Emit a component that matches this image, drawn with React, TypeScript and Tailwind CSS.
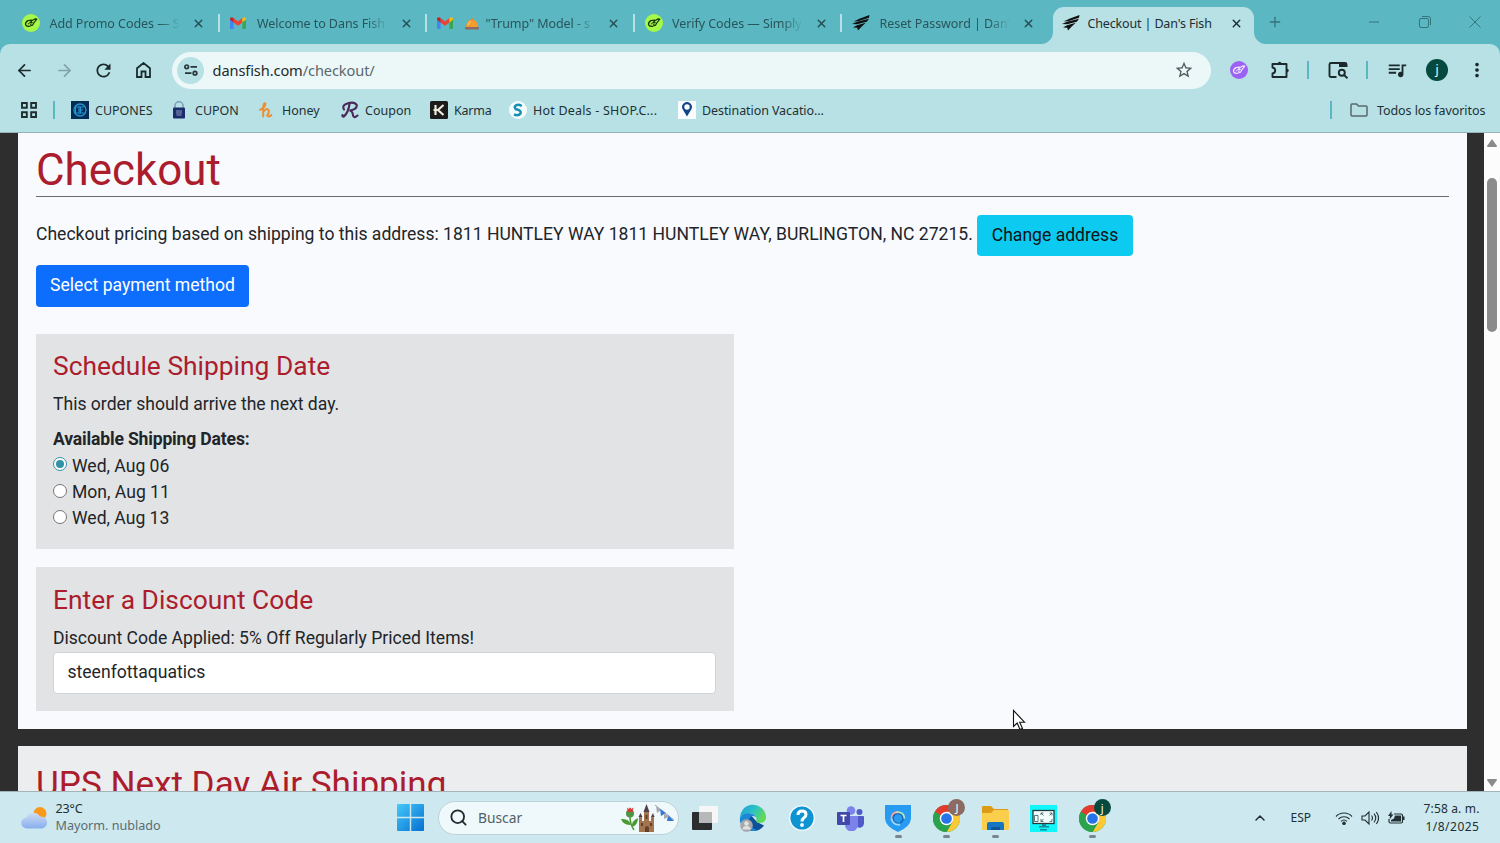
import { ReactNode } from "react";
import { ArrowLeft, ArrowRight, ChevronUp, Minus, Plus, Search, X } from "lucide-react";
import { MdMoreVert, MdQueueMusic, MdRefresh, MdStarBorder } from "react-icons/md";

function SimplyIcon({ bg = "#a5f948", ink = "#17330c" }: { bg?: string; ink?: string }) {
  return (
    <svg viewBox="0 0 18 18" className="size-[18px]">
      <circle cx="9" cy="9" r="9" fill={bg} />
      <path
        d="M9.500 6.200 6 6.600Q3.300 8 3.500 10.500 4.300 12.800 7.300 12.300L10.500 11.200 12.200 8.300 14.800 5.200 13.200 4.800 9.800 6.800 7.800 8.800 10.200 8.600"
        fill="none"
        stroke={ink}
        strokeWidth="1.2"
        strokeLinejoin="round"
        strokeLinecap="round"
      />
      <path d="M5.800 9.800h1.500M8.300 10.500h1.200" stroke={ink} strokeWidth="1" />
    </svg>
  );
}

function GmailIcon() {
  return (
    <svg viewBox="0 0 16 12" className="h-3 w-4">
      <path d="M0 1.6V11q0 1 1 1h2.6V5Z" fill="#4285f4" />
      <path d="M12.4 5v7H15q1 0 1-1V1.6Z" fill="#34a853" />
      <path d="M3.6 1 8 4.4 12.4 1v4.4L8 8.8 3.6 5.4Z" fill="#ea4335" />
      <path d="M0 2Q.3-.8 3.6 1v4.4L0 2.8Z" fill="#c5221f" />
      <path d="M16 2Q15.7-.8 12.4 1v4.4L16 2.8Z" fill="#fbbc04" />
    </svg>
  );
}

function FishIcon() {
  return (
    <svg viewBox="0 0 18 16" className="h-4 w-[18px]" fill="#111">
      <path d="M1.500 6.500 8 3.500 17.500 0 17 2.800 7 6Z" />
      <path d="M0 9 5 6.800 17 3.800 14.800 6.800 5 9.300Z" />
      <path d="M1 12.500 5 10.200 13.800 7.800 9.500 11.800 6 15.500 5.200 12.800Z" />
    </svg>
  );
}

function BellIcon() {
  return (
    <svg viewBox="0 0 14 12" className="h-3 w-3.5">
      <path d="M1 9.200a6 7.700 0 0 1 12 0Z" fill="#f79b2c" />
      <circle cx="7" cy="1.600" r="1.300" fill="#e98722" />
      <path d="M3 7Q4 4 6 3.500" stroke="#ffd083" fill="none" />
      <rect y="9" width="14" height="2.500" rx="1" fill="#8d6a65" />
    </svg>
  );
}

const tabs: { icon: ReactNode; title: ReactNode }[] = [
  { icon: <SimplyIcon />, title: "Add Promo Codes — S" },
  { icon: <GmailIcon />, title: "Welcome to Dans Fish" },
  {
    icon: <GmailIcon />,
    title: (
      <span className="flex items-center">
        <BellIcon /> <span className="ml-[7px]">"Trump" Model - s</span>
      </span>
    ),
  },
  { icon: <SimplyIcon />, title: "Verify Codes — Simply" },
  { icon: <FishIcon />, title: "Reset Password | Dan's" },
];

function TabStrip() {
  return (
    <div className="flex h-[44px] bg-[#5bb7c1] pl-[12px]">
      {tabs.map((tab, i) => (
        <div key={i} className="flex w-[207.5px] shrink-0 items-center pt-[2px] pl-[10px]">
          <span className="flex w-[27px] shrink-0 items-center">{tab.icon}</span>
          <span className="w-[134px] shrink-0 overflow-hidden whitespace-nowrap pt-px pl-[0.5px] tracking-[-0.06px] text-[#29555b] [mask-image:linear-gradient(to_right,#000_82%,transparent_98%)]">
            {tab.title}
          </span>
          <X size={13} strokeWidth={2.6} className="ml-[9px] shrink-0 text-[#254c51]" />
          {i < 4 && <span className="ml-auto h-[18px] w-[2px] bg-[#b7e2e5]" />}
        </div>
      ))}
      <div className="-ml-[9px] flex w-[222px] shrink-0 items-end self-stretch">
        <svg viewBox="0 0 12 12" className="size-[12px] shrink-0">
          <path d="M12 0V12H0A12 12 0 0 0 12 0Z" fill="#b7e1e5" />
        </svg>
        <div className="flex h-[37px] w-[201px] shrink-0 items-center rounded-t-[11px] bg-[#b7e1e5] pb-[5px] pl-[9px]">
          <FishIcon />
          <span className="ml-[8px] w-[142px] whitespace-nowrap pt-px tracking-[-0.15px] text-[#1d2d30]">
            Checkout | Dan's Fish
          </span>
          <X size={13} strokeWidth={2.6} className="text-[#1b2b2d]" />
        </div>
        <svg viewBox="0 0 12 12" className="size-[12px] shrink-0">
          <path d="M0 0V12H12A12 12 0 0 1 0 0Z" fill="#b7e1e5" />
        </svg>
      </div>
      <div className="flex grow items-center pl-[4px] text-[#34747b]">
        <Plus size={16} strokeWidth={2} />
        <Minus size={16} strokeWidth={1.5} className="ml-auto" />
        <svg viewBox="0 0 12 12" className="ml-[37px] size-[12px]" fill="none" stroke="currentColor">
          <rect x="0.5" y="2.5" width="9" height="9" rx="1.5" />
          <path d="M3 0.5h6.500a2 2 0 0 1 2 2V9" />
        </svg>
        <svg viewBox="0 0 12 12" className="ml-[38px] mr-[19px] size-[12px]" stroke="currentColor">
          <path d="M0.5 0.5 11.5 11.5M11.5 0.5 0.5 11.5" />
        </svg>
      </div>
    </div>
  );
}

function Toolbar() {
  return (
    <div className="bg-[#5bb7c1]">
      <div className="flex h-[52px] items-center rounded-t-[10px] bg-[#b7e1e5] text-[#1d2a2c]">
        <ArrowLeft size={19} strokeWidth={2.2} className="ml-[15px]" />
        <ArrowRight size={19} strokeWidth={2.2} className="ml-[21px] text-[#80a4a8]" />
        <MdRefresh size={21} className="ml-[19px]" />
        <svg viewBox="0 0 15 16" className="ml-[22px] h-4 w-[15px]" fill="none" stroke="currentColor" strokeWidth="1.8">
          <path d="M1 6.200 7.500 1 14 6.200V15H9.500V9.500h-4V15H1Z" />
        </svg>
        <div className="ml-[21px] flex h-[37px] w-[1039px] items-center rounded-full bg-[#ecf7f8] pl-[5px]">
          <span className="flex size-[27px] items-center justify-center rounded-full bg-[#b7e1e5]">
            <svg viewBox="0 0 14 12" className="h-3 w-3.5" fill="none" stroke="#273538" strokeWidth="1.7">
              <circle cx="2.700" cy="2.800" r="1.800" />
              <path d="M6.500 2.800H13M1 9.200h6.500" />
              <circle cx="11" cy="9.200" r="1.800" />
            </svg>
          </span>
          <span className="ml-[8.5px] pb-px text-[14.6px] tracking-[-0.1px] text-[#1f2b2d]">
            dansfish.com<span className="text-[#59696b]">/checkout/</span>
          </span>
          <MdStarBorder size={20} className="ml-auto mr-[17px] text-[#4d5b5d]" />
        </div>
        <span className="ml-[19px]">
          <SimplyIcon bg="#9c62f5" ink="#f2e6ff" />
        </span>
        <svg viewBox="0 0 18 18" className="ml-[23px] size-[18px]" fill="none" stroke="currentColor" strokeWidth="1.9">
          <path d="M1.500 3H15.500V16H1.500V12.500Q4.200 12 4.200 9.500T1.500 6.500Z" strokeLinejoin="round" />
          <path d="M6.800 2.500a1.800 1.800 0 0 1 3.600 0ZM16 7.800a1.800 1.800 0 0 1 0 3.600Z" fill="currentColor" stroke="none" />
        </svg>
        <span className="ml-[18px] h-[18px] w-[2px] bg-[#5bb7c1]" />
        <svg viewBox="0 0 20 18" className="ml-[19px] h-[18px] w-5" fill="none" stroke="currentColor" strokeWidth="1.9">
          <path d="M8.500 16H3Q1.500 16 1.500 14.500V3.500Q1.500 2 3 2H17Q18.500 2 18.500 3.500V6" />
          <path d="M11 2h7.500v4H11Z" fill="currentColor" stroke="none" />
          <circle cx="13.800" cy="11.800" r="3" />
          <path d="m16 14 3.500 3.300" />
        </svg>
        <span className="ml-[18px] h-[18px] w-[2px] bg-[#5bb7c1]" />
        <MdQueueMusic size={22} className="ml-[18px]" />
        <span className="ml-[18px] flex size-[22px] items-center justify-center rounded-full bg-[#05493f] text-[12px] text-white">
          j
        </span>
        <MdMoreVert size={22} className="ml-[18px]" />
      </div>
    </div>
  );
}

function Bookmark({ icon, label, className }: { icon: ReactNode; label: string; className: string }) {
  return (
    <div className={`flex shrink-0 items-center whitespace-nowrap ${className}`}>
      <span className="flex w-[24px] shrink-0">{icon}</span>
      <span className="pt-px">{label}</span>
    </div>
  );
}

function BookmarksBar() {
  return (
    <div className="flex h-[37px] items-center border-b border-[#93b4b8] bg-[#b7e1e5] pb-[8px] text-[#1f3134]">
      <svg viewBox="0 0 16 16" className="ml-[21px] size-4" fill="none" stroke="#1f2d2f" strokeWidth="1.9">
        <path d="M1 1h4.800v4.800H1ZM10.200 1H15v4.800h-4.800ZM1 10.200h4.800V15H1ZM10.200 10.200H15V15h-4.800Z" />
      </svg>
      <span className="ml-[16px] mr-[16px] h-[18px] w-[2px] bg-[#5bb7c1]" />
      <Bookmark
        className="w-[100px]"
        label="CUPONES"
        icon={
          <svg viewBox="0 0 18 18" className="size-[18px]">
            <rect width="18" height="18" fill="#062c55" />
            <circle cx="9" cy="9" r="6" fill="none" stroke="#2595d2" strokeWidth="1.3" />
            <path d="M8 4.500v9M13 6H9.500v6H13M9.500 9H12M7 6H4.500v6H7" fill="none" stroke="#2595d2" strokeWidth="1.2" />
          </svg>
        }
      />
      <Bookmark
        className="w-[87px]"
        label="CUPON"
        icon={
          <svg viewBox="0 0 16 18" className="h-[18px] w-4">
            <path d="M4 7V4.800a4 4 0 0 1 8 0V7" fill="none" stroke="#7f9dbb" strokeWidth="1.6" />
            <rect x="2" y="6.500" width="12" height="11" rx="1" fill="#1b2c6b" />
            <path d="M5 10h6M5 12h6M5.500 14h5" stroke="#a9b4d8" strokeWidth="0.8" />
          </svg>
        }
      />
      <Bookmark
        className="w-[83px]"
        label="Honey"
        icon={
          <svg viewBox="0 0 16 18" className="h-[18px] w-4" fill="none" stroke="#ef8e31" strokeWidth="2">
            <path
              d="M2 8.800Q7 6.500 7.500 2.800 6 .8 5.200 6V15.500M5.200 11Q8 6.800 10 8.500T9.300 14.500Q11 16.500 13.300 14"
              strokeLinecap="round"
            />
          </svg>
        }
      />
      <Bookmark
        className="w-[89px]"
        label="Coupon"
        icon={
          <svg viewBox="0 0 18 18" className="size-[18px]" fill="none" stroke="#4b2859" strokeWidth="2.1">
            <path
              d="M8.500 3Q7.500 11 3 15.500 1 16 1.500 14M3 8.500Q.500 4 7 2.200T15.800 4Q16 8.500 8.500 9.500 11.500 10 12 14T16.500 14.500"
              strokeLinecap="round"
            />
          </svg>
        }
      />
      <Bookmark
        className="w-[79px] tracking-[-0.2px]"
        label="Karma"
        icon={
          <svg viewBox="0 0 18 18" className="size-[18px]">
            <rect width="18" height="18" rx="1.500" fill="#1b1b1b" />
            <path d="M5.500 4v10M13.500 4 8 9l5.500 5M8.500 9h-5" stroke="#efe9da" strokeWidth="2.2" fill="none" />
          </svg>
        }
      />
      <Bookmark
        className="w-[169px] tracking-[0.2px]"
        label="Hot Deals - SHOP.C..."
        icon={
          <svg viewBox="0 0 18 18" className="size-[18px]">
            <circle cx="9" cy="9" r="9" fill="#f5fcfd" />
            <path d="M12.800 5Q9.500 3 7 4.300T7 8.300Q12.800 9.300 11.500 12.500 9.500 15.300 5 13.500" fill="none" stroke="#1590b4" strokeWidth="2.5" />
          </svg>
        }
      />
      <Bookmark
        className="w-[160px] tracking-[-0.08px]"
        label="Destination Vacatio..."
        icon={
          <svg viewBox="0 0 18 18" className="size-[18px]">
            <rect width="18" height="18" fill="#f8fcff" />
            <path d="M9 15.500 4.800 8.500a4.900 4.900 0 1 1 8.400 0Z" fill="#124488" />
            <circle cx="9" cy="6" r="2.700" fill="#fff" />
          </svg>
        }
      />
      <span className="ml-auto h-[18px] w-[2px] bg-[#5bb7c1]" />
      <svg viewBox="0 0 18 14" className="ml-[18px] mr-[9px] h-3.5 w-[18px]" fill="none" stroke="#59686a" strokeWidth="1.5">
        <path d="M1 12V2q0-1 1-1h4.500l2 2H16q1 0 1 1v8q0 1-1 1H2q-1 0-1-1Z" />
      </svg>
      <span className="mr-[14px] w-[109px] whitespace-nowrap pt-px tracking-[-0.08px]">Todos los favoritos</span>
    </div>
  );
}

const shippingDates = ["Wed, Aug 06", "Mon, Aug 11", "Wed, Aug 13"];

function CheckoutPage() {
  return (
    <main className="flex h-[658px] overflow-hidden bg-[#2e2e2e] font-['Roboto',sans-serif] text-[17.57px] leading-[26.35px] text-[#212529]">
      <div className="ml-[18px] w-[1449px] shrink-0">
        <section className="h-[595.5px] bg-[#f9fafd] px-[18px] pt-[11px]">
          <h1 className="h-[53px] border-b border-[#6a6c70] text-[43.9px] leading-[52px] text-[#ab1d2d]">Checkout</h1>
          <div className="mt-[18px] flex h-[41px] items-center whitespace-nowrap">
            <p className="w-[941px] pb-[3px]">
              Checkout pricing based on shipping to this address: 1811 HUNTLEY WAY 1811 HUNTLEY WAY, BURLINGTON, NC 27215.
            </p>
            <button className="h-[41px] w-[156px] rounded-[4px] bg-[#0dcaf0] text-[#101416]">Change address</button>
          </div>
          <button className="mt-[9px] block h-[42px] w-[213px] rounded-[4px] bg-[#0d6efd] pb-px text-white">
            Select payment method
          </button>
          <div className="mt-[26.5px] h-[215.5px] w-[698px] bg-[#e2e3e5] px-[17px] pt-[16.5px]">
            <h4 className="text-[26.35px] leading-[32px] tracking-[0.02px] text-[#ab1d2d]">Schedule Shipping Date</h4>
            <p className="mt-[9px]">This order should arrive the next day.</p>
            <p className="mt-[9px] font-bold tracking-[-0.17px]">Available Shipping Dates:</p>
            {shippingDates.map((date, i) => (
              <label key={date} className="flex items-center">
                <span
                  className={`mr-[5px] mb-[3px] flex size-[14px] items-center justify-center rounded-full border bg-white ${
                    i === 0 ? "border-[#3393a4]" : "border-[#767676]"
                  }`}
                >
                  {i === 0 && <span className="size-[8px] rounded-full bg-[#3393a4]" />}
                </span>
                {date}
              </label>
            ))}
          </div>
          <div className="mt-[18px] h-[144px] w-[698px] bg-[#e2e3e5] px-[17px] pt-[17px]">
            <h4 className="text-[26.35px] leading-[32px] tracking-[0.02px] text-[#ab1d2d]">Enter a Discount Code</h4>
            <p className="mt-[9px]">Discount Code Applied: 5% Off Regularly Priced Items!</p>
            <div className="mt-[0.5px] flex h-[42px] w-[663px] items-center rounded-[4px] border border-[#ced4da] bg-white px-[13.5px] pb-[2px]">
              steenfottaquatics
            </div>
          </div>
        </section>
        <section className="mt-[17.5px] h-[80px] bg-[#ecedef] px-[18px] pt-[14px]">
          <h2 className="text-[35.1px] leading-[48px] text-[#ab1d2d]">UPS Next Day Air Shipping</h2>
        </section>
      </div>
      <div className="ml-auto flex w-[16px] shrink-0 flex-col items-center bg-[#fcfcfc]">
        <svg viewBox="0 0 10 8" className="mt-[6px] h-2 w-2.5" fill="#8b8b8b">
          <path d="M5 0 10 7Q10 8 9 8H1Q0 8 0 7Z" />
        </svg>
        <span className="mt-[31px] h-[154px] w-[10px] rounded-full bg-[#8b8b8b]" />
        <svg viewBox="0 0 10 8" className="mt-auto mb-[4px] h-2 w-2.5" fill="#8b8b8b">
          <path d="M5 8 0 1Q0 0 1 0H9Q10 0 10 1Z" />
        </svg>
      </div>
    </main>
  );
}

function ChromeIcon({ letter, bg }: { letter: string; bg: string }) {
  return (
    <span className="relative">
      <svg viewBox="0 0 48 48" className="size-[27px]">
        <circle cx="24" cy="24" r="24" fill="#2ba24c" />
        <path d="M24 24 3.200 12A24 24 0 0 1 44.800 12Z" fill="#e33b2e" />
        <path d="M44.800 12A24 24 0 0 1 24 48L34.400 30 24 12Z" fill="#fcc934" />
        <path d="M3.200 12A24 24 0 0 0 24 48L34.400 30H13.600Z" fill="#2ba24c" />
        <circle cx="24" cy="24" r="12" fill="#fff" />
        <circle cx="24" cy="24" r="9.500" fill="#2674e8" />
      </svg>
      <span
        className={`absolute -top-[6px] left-[15px] flex size-[17px] items-center justify-center rounded-full text-[11px] leading-none text-white ${bg}`}
      >
        {letter}
      </span>
    </span>
  );
}

function EdgeIcon() {
  return (
    <svg viewBox="0 0 28 28" className="size-[28px]">
      <defs>
        <linearGradient id="edge-top" x1="0" y1="0" x2="1" y2="0.5">
          <stop stopColor="#1c9ade" />
          <stop offset="0.55" stopColor="#2bc3c2" />
          <stop offset="1" stopColor="#62d957" />
        </linearGradient>
      </defs>
      <path d="M1 14A13 13 0 0 0 14 27Q21 27 25 21.500L18 18 10 9Z" fill="#0e4f9c" />
      <path d="M1 15A13 13 0 0 1 27 12.500Q27.500 19 20.500 19 16 18.500 17.500 15.500 17.500 9.500 11 9.500 4 9.500 1 15Z" fill="url(#edge-top)" />
      <path d="M1 14.500Q4 8.500 11 9.500 16.500 10 17 13.500 14 11 11.500 13 8.500 16 11.500 21 14 25.500 19 26 12 28.500 6 24.500 0 20 1 14.500Z" fill="#1b87d6" />
      <circle cx="7.500" cy="21.500" r="6.300" fill="#a7a7aa" />
      <circle cx="7.500" cy="19.500" r="2.300" fill="#e2e2e3" />
      <path d="M3.500 25.500q0-3.500 4-3.500t4 3.500Z" fill="#e2e2e3" />
    </svg>
  );
}

function AppSlot({ children, running }: { children: ReactNode; running?: boolean }) {
  return (
    <div className="flex h-full w-[48.45px] shrink-0 flex-col items-center pt-[12px]">
      <span className="flex h-[28px] items-center">{children}</span>
      {running && <span className="mt-[3px] h-[3px] w-[7px] rounded-full bg-[#76878b]" />}
    </div>
  );
}

function Taskbar() {
  return (
    <footer className="flex h-[52px] items-center border-t border-[#a3b5b8] bg-[#cde8ee] font-['Noto_Sans',sans-serif] text-[#203034]">
      <div className="flex w-[397px] shrink-0 items-center pl-[21px]">
        <svg viewBox="0 0 27 22" className="h-[22px] w-[27px]">
          <defs>
            <linearGradient id="cloud" x2="0" y2="1">
              <stop stopColor="#cfdcf5" />
              <stop offset="1" stopColor="#87aeee" />
            </linearGradient>
          </defs>
          <circle cx="19" cy="6.500" r="6.500" fill="#f9991c" />
          <path d="M6 21.500a5.500 5.500 0 0 1-.500-11A7.500 7.500 0 0 1 19 9.500a6 6 0 0 1 2 12Z" fill="url(#cloud)" />
        </svg>
        <div className="ml-[7.5px] whitespace-nowrap pb-px text-[12.6px] leading-[17.3px]">
          <div className="tracking-[-0.2px]">23°C</div>
          <div className="text-[#5b6c70]">Mayorm. nublado</div>
        </div>
      </div>
      <svg viewBox="0 0 26 26" className="size-[27px] shrink-0">
        <defs>
          <linearGradient id="win" x2="1" y2="1">
            <stop stopColor="#46c8fb" />
            <stop offset="1" stopColor="#0470cf" />
          </linearGradient>
        </defs>
        <path
          d="M1 0H12.300V12.300H0V1Q0 0 1 0ZM13.700 0H25Q26 0 26 1V12.300H13.700ZM0 13.700H12.300V26H1Q0 26 0 25ZM13.700 13.700H26V25Q26 26 25 26H13.700Z"
          fill="url(#win)"
        />
      </svg>
      <div className="ml-[14px] flex h-[34px] w-[241px] shrink-0 items-center rounded-full border border-[#bcd3d9] bg-[#eff8fb] pl-[10px]">
        <Search size={19} strokeWidth={2.3} className="text-[#1f2a2d]" />
        <span className="ml-[10px] text-[13.8px] text-[#506064]">Buscar</span>
        <svg viewBox="0 0 54 28" className="ml-auto mr-[3px] h-[28px] w-[54px]">
          <path d="M9 13Q9 20 13 26" fill="none" stroke="#4c9a32" strokeWidth="1.5" />
          <path d="M0 15Q8 14 10 21 2 21 0 15ZM17 14Q10 17 11 23 17 21 17 14Z" fill="#4c9a32" />
          <circle cx="9" cy="9.500" r="4" fill="#4b9443" />
          <path d="M6 3.500 8 5 9 3.300 10.500 5 12.500 3.500 11.500 8H7Z" fill="#d83a34" />
          <path d="M18 13h3v4h2V8h5v9h2v-4h3v15H18Z" fill="#a3744f" />
          <path d="M17.500 13 19.500 9 21.500 13ZM22.500 8 25.500 0 28.500 8ZM30 13 32 9 33.500 13Z" fill="#4d4148" />
          <path d="M24 28V23.500q2-3 4 0V28ZM20 19h2v3h-2ZM29 19h2v3h-2ZM24.500 11h2v4h-2Z" fill="#644026" />
          <path d="M34 1 53 16" stroke="#98a7b7" strokeWidth="1" />
          <path d="m35 2 5 4-4 3Z" fill="#a6a9ad" />
          <path d="m39 5 6 4-5 3ZM47 11l6 6h-7Z" fill="#3579d4" />
          <path d="m43 9 5 3.500-5 2.500Z" fill="#a6a9ad" />
        </svg>
      </div>
      <div className="ml-[1.5px] flex h-full shrink-0">
        <AppSlot>
          <svg viewBox="0 0 26 26" className="size-[26px]">
            <rect y="7" width="20" height="18" rx="1" fill="#2b2d2f" />
            <rect x="7" y="1" width="19" height="17" rx="1" fill="#f6f6f6" />
            <path d="M7 7h13v11H7Z" fill="#b7b8b9" />
          </svg>
        </AppSlot>
        <AppSlot>
          <EdgeIcon />
        </AppSlot>
        <AppSlot>
          <svg viewBox="0 0 26 26" className="size-[26px]">
            <circle cx="13" cy="13" r="12.300" fill="#0e94d2" stroke="#f3fafc" strokeWidth="1.4" />
            <path d="M9 10Q9 6 13 6T17 9.500Q17 11.500 15 12.800T13 16.500" fill="none" stroke="#fff" strokeWidth="3" />
            <circle cx="13" cy="20" r="1.900" fill="#fff" />
          </svg>
        </AppSlot>
        <AppSlot>
          <svg viewBox="0 0 27 25" className="h-[25px] w-[27px]">
            <circle cx="14" cy="4.500" r="4.300" fill="#7b83eb" />
            <circle cx="22.500" cy="6" r="3" fill="#5059c9" />
            <path d="M18 10h8q1 0 1 1v6a4.500 4.500 0 0 1-8 3Z" fill="#5059c9" />
            <path d="M8 10h13v9a6 6 0 0 1-13 0Z" fill="#7b83eb" />
            <rect y="6" width="13" height="13" rx="1" fill="#4248ab" />
            <path d="M3.500 9.500h6M6.500 9.500V16" stroke="#fff" strokeWidth="1.7" />
          </svg>
        </AppSlot>
        <AppSlot running>
          <svg viewBox="0 0 26 28" className="h-[28px] w-[26px]">
            <path d="M0 1H26V15Q25 23 13 28 1 23 0 15Z" fill="#279bf2" />
            <circle cx="13" cy="14.500" r="5" fill="none" stroke="#1766b0" strokeWidth="1.6" />
            <path d="M6.500 16Q5.500 8 13.500 8" stroke="#f2a6a4" strokeWidth="1.8" fill="none" />
            <path d="M11.500 8.200Q19 8 19.500 14.500" stroke="#b8e5c4" strokeWidth="1.8" fill="none" />
            <path d="M6.500 15Q8.500 21.500 15 20.500" stroke="#9ed9fb" strokeWidth="1.8" fill="none" />
          </svg>
        </AppSlot>
        <AppSlot running>
          <ChromeIcon letter="J" bg="bg-[#8b6b62]" />
        </AppSlot>
        <AppSlot running>
          <svg viewBox="0 0 27 26" className="h-[26px] w-[27px]">
            <path d="M0 2Q0 1 1 1H9L12 4H26V12H0Z" fill="#dc9b17" />
            <path d="M0 8H9L12 5H26Q27 5 27 6V24Q27 25 26 25H1Q0 25 0 24Z" fill="#fbce4b" />
            <path d="M5 25V19Q5 17 7 17H20Q22 17 22 19V25Z" fill="#1676c3" />
            <path d="M9 22h9v3H9Z" fill="#0e5695" />
          </svg>
        </AppSlot>
        <AppSlot>
          <svg viewBox="0 0 27 27" className="size-[27px]">
            <path d="M0 0H27V27H0Z" fill="#0ff7fb" />
            <rect x="3" y="5.500" width="21" height="13" fill="#f3ffff" stroke="#24393b" strokeWidth="1.3" />
            <path d="M12 19h4v2h3v1.500H9V21h3ZM10 24h7v1.500h-7Z" fill="#178b96" />
            <path
              d="M4.500 10.500h3.500v6H4.500ZM11 10V8h2.500M11 8l2.500 2.500M19.500 8H22v2.500M22 8l-2.500 2.500M11 14v2.500h2.500M11 16.500l2.500-2.500M19.500 16.500H22V14"
              fill="none"
              stroke="#405456"
              strokeWidth="0.8"
            />
          </svg>
        </AppSlot>
        <AppSlot running>
          <ChromeIcon letter="j" bg="bg-[#05493f]" />
        </AppSlot>
      </div>
      <div className="ml-auto flex shrink-0 items-center">
        <ChevronUp size={16} strokeWidth={2.2} />
        <span className="ml-[23px] w-[44px] text-[12px]">ESP</span>
        <svg viewBox="0 0 18 14" className="h-3.5 w-[18px]" fill="none" stroke="currentColor" strokeWidth="1.1">
          <path d="M1 5.500a11 11 0 0 1 16 0M3.500 8a8 8 0 0 1 11 0M6 10.300a4.500 4.500 0 0 1 6 0" />
          <circle cx="9" cy="12.300" r="1.200" fill="currentColor" />
        </svg>
        <svg viewBox="0 0 18 14" className="ml-[8px] h-3.5 w-[18px]" fill="none" stroke="currentColor" strokeWidth="1.1">
          <path d="M1 5h3l4-4v12L4 9H1ZM10.500 4.500q2 2.500 0 5M13 2.700q3.500 4.300 0 8.600M15.300 1q4.500 6 0 12" />
        </svg>
        <svg viewBox="0 0 18 14" className="ml-[8px] h-3.5 w-[18px]" fill="none" stroke="currentColor" strokeWidth="1.2">
          <path d="M7 3h7q1.500 0 1.500 1.500v6Q15.500 12 14 12H3.500Q2 12 2 10.500V8" />
          <path d="M8 4.500h6v6H4V9l3-1.500ZM16 5.500h1.500v3.500H16ZM4.500 0 1 5h2L2.500 8.500 6.500 3.500H4.500Z" fill="currentColor" stroke="none" />
        </svg>
        <div className="ml-[18px] mr-[20.500px] w-[57px] text-[12px] leading-[17.500px]">
          <div className="flex justify-end whitespace-nowrap tracking-[0.15px]">7:58 a. m.</div>
          <div className="flex justify-end whitespace-nowrap tracking-[0.5px]">1/8/2025</div>
        </div>
      </div>
    </footer>
  );
}

export default function App() {
  return (
    <div className="relative h-[843px] w-[1500px] overflow-hidden font-['Noto_Sans',sans-serif] text-[12.5px] leading-[20px]">
      <TabStrip />
      <Toolbar />
      <BookmarksBar />
      <CheckoutPage />
      <Taskbar />
      {/* mouse pointer */}
      <svg viewBox="0 0 14 22" className="absolute left-[1012px] top-[709px] h-[22px] w-3.5">
        <path d="M1.500 1.500V17.500L5.200 14 8 20.500 10.500 19.400 7.700 13.200H12.500Z" fill="#fff" stroke="#111" strokeWidth="1.1" />
      </svg>
    </div>
  );
}
